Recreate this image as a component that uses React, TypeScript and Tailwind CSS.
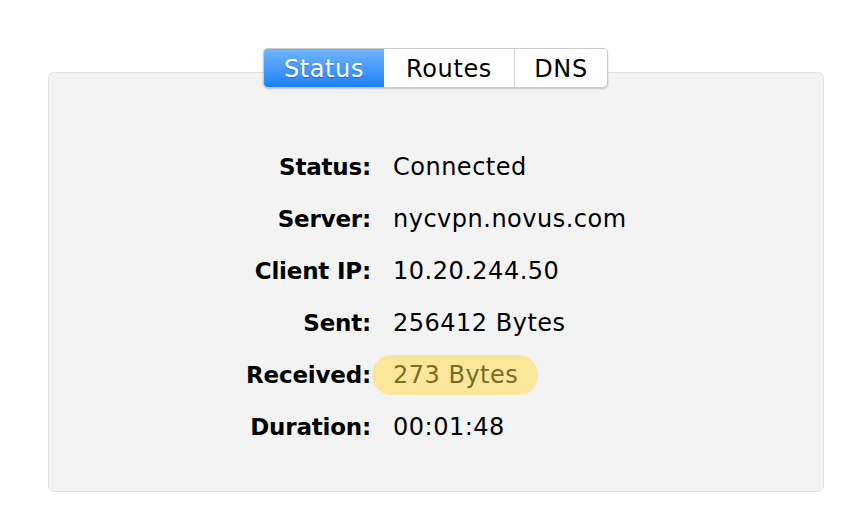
import React from "react";

const rows: [string, string, boolean?][] = [
  ["Status:", "Connected"],
  ["Server:", "nycvpn.novus.com"],
  ["Client IP:", "10.20.244.50"],
  ["Sent:", "256412 Bytes"],
  ["Received:", "273 Bytes", true],
  ["Duration:", "00:01:48"],
];

export default function App() {
  return (
    <div
      className="w-[866px] h-[510px] bg-white relative"
      style={{ fontFamily: '"DejaVu Sans", "Noto Sans", sans-serif' }}
    >
      <div className="absolute left-[48px] top-[72px] w-[776px] h-[420px] rounded-[6px] border border-[#e2e2e2] bg-[#f3f3f3]">
        <div className="flex flex-col items-start pl-[196px] pt-[68px]">
          {rows.map(([label, value, hl]) => (
            <div key={label} className="flex items-center h-[52px]">
              <div className="w-[126px] text-right font-bold text-[23px] text-black tracking-[-0.2px]">
                {label}
              </div>
              {hl ? (
                <div className="ml-[1px] h-[40px] pl-[21px] pr-[20px] rounded-full bg-[#fae79a] flex items-center text-[24px] text-[#7d6a26] tracking-[0.5px]">
                  {value}
                </div>
              ) : (
                <div className="ml-[22px] text-[24px] text-black tracking-[0.5px]">{value}</div>
              )}
            </div>
          ))}
        </div>
      </div>
      <div className="absolute left-[263px] top-[48px] h-[40px] w-[345px] flex rounded-[5px] border border-[#c9c9c9] bg-white shadow-[0_1px_2px_rgba(0,0,0,0.2)] overflow-hidden text-[24px] tracking-[0.6px]">
        <div className="w-[120px] flex items-center justify-center pt-[1px] text-white bg-gradient-to-b from-[#6fb5fb] to-[#1a7ffb] [text-shadow:0_1px_1px_rgba(0,0,0,0.25)]">
          Status
        </div>
        <div className="w-[131px] flex items-center justify-center pt-[1px] text-black border-r border-[#d6d6d6]">
          Routes
        </div>
        <div className="flex-1 flex items-center justify-center pt-[1px] text-black">DNS</div>
      </div>
    </div>
  );
}
